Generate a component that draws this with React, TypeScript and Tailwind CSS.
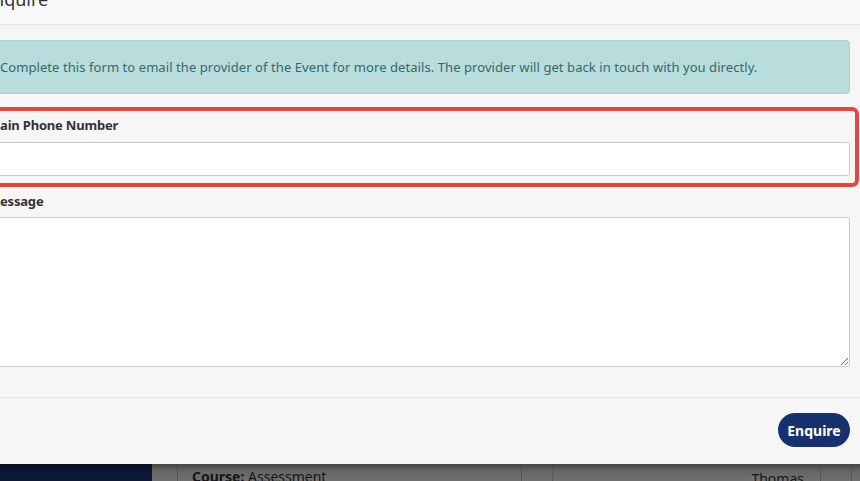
export default function App() {
  return (
    <div className="relative h-[481px] w-[860px] overflow-hidden bg-[#6b6b6b] font-['Noto_Sans',sans-serif]">
      {/* page behind the backdrop */}
      <div className="flex h-full flex-col justify-end">
        <div className="flex h-[17px] items-start">
          <div className="h-full w-[152px] bg-[#0b1734]" />
          <div className="flex h-full flex-1 bg-gradient-to-b from-[#5e5e5e] to-[#707070]">
            <div className="w-[26px] border-r border-[#555]" />
            <div className="flex-1 border-r border-[#555] pl-[14px] pt-[4px] text-[14px] leading-[18px] text-[#161616]">
              <span className="font-bold">Course:</span> Assessment
            </div>
            <div className="w-[31px] border-r border-[#555]" />
            <div className="relative w-[268px] border-r border-[#555] pt-[6px] pr-[16px] text-right text-[14px] leading-[18px] text-[#161616]">
              Thomas
            </div>
            <div className="w-[31px] border-r border-[#555]" />
            <div className="w-[8px]" />
          </div>
        </div>
      </div>

      {/* modal */}
      <div className="absolute left-[-27px] top-[-26px] w-[892px] bg-[#f6f6f6] shadow-[0_2px_6px_rgba(0,0,0,0.35)]">
        <div className="border-b border-[#e1e1e1] bg-[#fafafa] px-[10px] py-[15px]">
          <h4 className="text-[18px] leading-[20px] text-[#333]">Enquire</h4>
        </div>
        <div className="px-[15px] pb-[16px] pt-[15px]">
          <div className="rounded-[4px] border border-[#a6cfd1] bg-[#b9dcdd] py-[17px] pl-[11px] text-[13px] leading-[18px] tracking-[0.07px] text-[#336a6d]">
            Complete this form to email the provider of the Event for more details. The provider will get back in touch with you directly.
          </div>
          <div className="-mx-[9px] mt-[13px] rounded-[7px] border-[4px] border-[#e8463b] px-[5px] pb-[7px] pt-[4px]">
            <label className="mb-[7px] block text-[13px] font-bold leading-[20px] tracking-[-0.2px] text-[#333]">
              Main Phone Number
            </label>
            <input
              type="text"
              className="block h-[34px] w-full rounded-[3px] border border-[#cacaca] bg-white"
            />
          </div>
          <div className="mb-[14px] mt-[4px]">
            <label className="mb-[6px] block text-[13px] font-bold leading-[20px] tracking-[-0.2px] text-[#333]">
              Message
            </label>
            <textarea className="block h-[150px] w-full rounded-[3px] border border-[#cacaca] bg-white" />
          </div>
        </div>
        <div className="flex justify-end border-t border-[#e1e1e1] px-[15px] pb-[17px] pt-[15px]">
          <button className="h-[34px] w-[72px] rounded-full bg-[#17306e] text-[14px] font-bold text-white">
            Enquire
          </button>
        </div>
      </div>
    </div>
  );
}
